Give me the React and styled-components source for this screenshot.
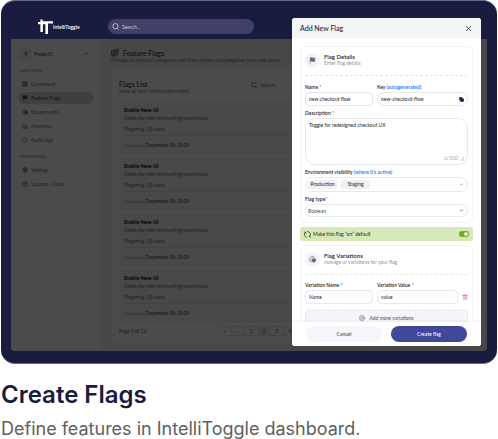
import React from 'react';
import styled, { createGlobalStyle } from 'styled-components';
import {
  LayoutDashboard, Flag, ChartColumn, CircleAlert, Settings, CircleHelp,
  ChevronUp, ChevronDown, X, Trash2, CirclePlus, Copy,
} from 'lucide-react';

const Global = createGlobalStyle`
  *, *::before, *::after { box-sizing: border-box; }
  body { margin: 0; background: #fff; }
  h1, h2, h3, p { margin: 0; }
  button, input, textarea, select { font: inherit; color: inherit; margin: 0; }
  svg { display: block; flex: none; }
`;

const Page = styled.main`
  font-family: Inter, "Liberation Sans", sans-serif;
  color: #1a1c3f;
  padding: 0 1px;
`;

const Device = styled.section`
  position: relative;
  font-family: Lato, "Liberation Sans", sans-serif;
  font-size: 5px;
  line-height: 6px;
  background: #1a1c3f;
  border: 1px solid #686b83;
  border-width: 1px 0;
  border-radius: 14px;
  padding: 0 10px 12px;
`;

const TopBar = styled.header`
  height: 38px;
  padding: 18px 0 0 27px;
  display: flex;
  align-items: flex-start;
  color: #fff;
`;

const Brand = styled.a`
  display: flex;
  width: 70px;
  color: #fff;
  text-decoration: none;
  font-weight: 600;
  span { margin-top: 5px; }
`;

const SearchPill = styled.label`
  display: flex;
  align-items: center;
  gap: 3px;
  width: 146px;
  height: 15px;
  padding: 0 4px;
  border-radius: 8px;
  background: #41406a;
  color: #c9c9d8;
`;

const BareInput = styled.input`
  border: 0;
  padding: 0;
  outline: 0;
  background: transparent;
  flex: 1;
  min-width: 0;
  width: 0;
  height: 10px;
  &::placeholder { color: inherit; opacity: 1; }
`;

const Dashboard = styled.div`
  display: flex;
  border-radius: 0 0 4px 4px;
  background: #474747;
  overflow: hidden;
`;

const Sidebar = styled.nav`
  width: 90px;
  flex: none;
  padding: 7px 7px 0;
  background: #4b4b4b;
`;

const Project = styled.button`
  display: flex;
  align-items: center;
  width: 100%;
  height: 15px;
  padding: 0 4px 0 1px;
  border: 1px solid #484848;
  border-radius: 5px;
  background: transparent;
  color: #171717;
  text-align: left;
  font-weight: 600;
  b { width: 12px; height: 12px; line-height: 12px; text-align: center; background: #474747; border-radius: 3px; }
  span { flex: 1; padding-left: 2px; }
`;

const MenuLabel = styled.h2`
  font-size: 4px;
  line-height: 6px;
  font-weight: 400;
  color: #262626;
  padding-left: 1px;
  margin: ${p => (p.$spaced ? '8px 0 4px' : '7px 0 4px')};
`;

const MenuLink = styled.a`
  display: flex;
  align-items: center;
  gap: 3px;
  height: 12px;
  margin-bottom: 2px;
  padding-left: 4px;
  border-radius: 6px;
  text-decoration: none;
  color: ${p => (p.$active ? '#151515' : '#222')};
  background: ${p => (p.$active ? '#3f3f3f' : 'transparent')};
`;

const Content = styled.div`
  flex: 1;
  min-width: 0;
  padding: 10px 10px 8px;
`;

const TitleRow = styled.div`
  display: flex;
  align-items: center;
  gap: 4px;
  height: 8px;
  color: #111;
`;

const PageTitle = styled.h1`
  font-size: 7px;
  line-height: 8px;
  font-weight: 600;
`;

const Muted = styled.p`
  color: #242424;
  line-height: 7px;
`;

const Panel = styled.section`
  margin-top: 6px;
  padding: 8px 8px 7px;
  border-radius: 5px;
  background: #4b4b4b;
`;

const PanelHead = styled.div`
  display: flex;
  height: 24px;
  > div { width: 128px; padding-top: 2px; }
  h2 { font-size: 7px; line-height: 8px; color: #111; font-weight: 600; }
`;

const PanelSearch = styled.label`
  display: flex;
  align-items: center;
  gap: 3px;
  flex: 1;
  height: 14px;
  padding: 0 3px;
  border: 1px solid #474747;
  border-radius: 4px;
  color: #242424;
`;

const FlagCard = styled.article`
  height: 53px;
  margin-bottom: 3px;
  padding: 4px 5px;
  border-radius: 6px;
  background: #484848;
  color: #1f1f1f;
  h3 { color: #0c0c0c; font-size: 5px; line-height: 8px; font-weight: 800; }
  p { line-height: 8px; }
`;

const Target = styled.p`
  height: 14px;
  padding-top: 3px;
  border-bottom: 1px solid #434343;
`;

const Created = styled.div`
  margin-top: 6px;
  color: #262626;
  font-size: 4px;
  strong { font-size: 5px; color: #161616; font-weight: 600; }
`;

const Pager = styled.div`
  display: flex;
  align-items: center;
  color: #191919;
  height: 10px;
  span { width: 100px; }
`;

const PageButton = styled.button`
  width: 13px;
  height: 10px;
  flex: none;
  padding: 0;
  border: 1px solid #444;
  border-left-width: 0;
  background: ${p => (p.$active ? '#424746' : 'transparent')};
  line-height: 8px;
`;

const Drawer = styled.section`
  position: absolute;
  top: 17px;
  right: 16px;
  bottom: 17px;
  width: 189px;
  display: flex;
  flex-direction: column;
  overflow: hidden;
  border-radius: 3px;
  background: #fff;
  color: #24262b;
`;

const DrawerHead = styled.header`
  display: flex;
  align-items: center;
  justify-content: space-between;
  height: 20px;
  flex: none;
  padding: 0 8px;
  background: #f4f5f7;
  h2 { font-size: 7px; line-height: 8px; font-weight: 500; }
`;

const IconButton = styled.button`
  padding: 0;
  border: 0;
  background: transparent;
  color: ${p => p.$color || '#24262b'};
`;

const DrawerBody = styled.form`
  flex: 1;
  min-height: 0;
  overflow: hidden;
  padding: 8px 8px 0;
`;

const Group = styled.section`
  border: 1px solid #f2f3f5;
  border-radius: 6px;
  padding: 6px 4px 5px;
`;

const GroupHead = styled.div`
  display: flex;
  align-items: center;
  gap: 4px;
  height: 23px;
  padding-bottom: 8px;
  border-bottom: 1px dashed #e6e7e9;
  h3 { font-size: 6px; line-height: 7px; font-weight: 600; }
  p { color: #929398; line-height: 7px; }
`;

const Round = styled.span`
  display: grid;
  place-items: center;
  width: 15px;
  height: 15px;
  border-radius: 50%;
  background: #f2f3f6;
  color: #686a76;
`;

const FieldRow = styled.div`
  display: flex;
  gap: 4px;
  margin-top: ${p => (p.$tight ? '7px' : '8px')};
`;

const Field = styled.div`
  display: flex;
  flex-direction: column;
  gap: 2px;
  flex: ${p => p.$grow || 'none'};
  width: ${p => p.$width || 'auto'};
  margin-top: ${p => p.$top || '0'};
  min-width: 0;
  label, > span { font-weight: 600; line-height: 6px; white-space: nowrap; }
  em { font-style: normal; color: #1677ff; }
  i { font-style: normal; color: #ef4444; }
`;

const Box = styled.div`
  display: flex;
  align-items: center;
  flex: none;
  height: 14px;
  padding: 0 3px;
  border: 1px solid #e8e9ec;
  border-radius: ${p => (p.$round ? '7px' : '4px')};
`;

const ValueRow = styled.div`
  display: flex;
  align-items: center;
  gap: 4px;
`;

const ValueBox = styled(Box)`
  flex: 1;
  min-width: 0;
`;

const AreaBox = styled.div`
  height: 47px;
  display: flex;
  flex-direction: column;
  padding: 3px;
  border: 1px solid #e8e9ec;
  border-radius: 10px;
  textarea { flex: 1; min-height: 0; border: 0; padding: 0; resize: none; outline: 0; background: transparent; overflow: hidden; }
  div { display: flex; justify-content: flex-end; align-items: flex-end; gap: 2px; color: #a4a5b2; }
`;

const ChipSelect = styled.button`
  display: flex;
  align-items: center;
  gap: 4px;
  width: 100%;
  height: 15px;
  padding: 0 3px 0 2px;
  border: 1px solid #e8e9ec;
  border-radius: 8px;
  background: #fff;
  svg { margin-left: auto; color: #777; }
`;

const Chip = styled.span`
  width: 29px;
  height: 9px;
  line-height: 9px;
  text-align: center;
  border-radius: 2px;
  background: #f0f0f0;
`;

const SelectBox = styled.div`
  display: flex;
  align-items: center;
  height: 13px;
  padding: 0 3px 0 2px;
  border: 1px solid #e8e9ec;
  border-radius: 7px;
  color: #4b4d52;
  select { appearance: none; flex: 1; min-width: 0; border: 0; padding: 0; background: transparent; outline: 0; }
`;

const ToggleRow = styled.label`
  display: flex;
  align-items: center;
  gap: 2px;
  height: 14px;
  margin: 4px 0;
  padding: 0 4px;
  border-radius: 3px;
  background: #d7e9b8;
  span { flex: 1; }
`;

const Switch = styled.input`
  appearance: none;
  width: 10px;
  height: 6px;
  border-radius: 3px;
  background: #76aa2d;
  display: flex;
  align-items: center;
  justify-content: flex-end;
  padding: 1px;
  &::before { content: ''; width: 4px; height: 4px; border-radius: 50%; background: #dff0c7; }
  &:not(:checked) { justify-content: flex-start; background: #9a9c97; }
`;

const AddButton = styled.button`
  display: flex;
  align-items: center;
  justify-content: center;
  gap: 4px;
  width: 100%;
  height: 15px;
  margin-top: 6px;
  border: 1px dashed #e1e3e8;
  border-radius: 3px;
  background: #f5f6f9;
  color: #4c4e56;
`;

const DrawerFoot = styled.footer`
  display: flex;
  gap: 9px;
  flex: none;
  height: 24px;
  padding: 4px 14px;
  box-shadow: 0 -1px 3px rgba(0, 0, 0, 0.06);
  background: #fff;
  z-index: 1;
`;

const Action = styled.button`
  flex: 1;
  height: 16px;
  border: 0;
  border-radius: 8px;
  background: ${p => (p.$primary ? '#424899' : '#f5f6fb')};
  color: ${p => (p.$primary ? '#fff' : '#3b3c43')};
`;

const Caption = styled.section`
  padding-top: 16px;
  h2 { font-size: 24px; line-height: 30px; font-weight: 600; }
  p { margin-top: 8px; font-size: 18px; line-height: 22px; color: #606060; }
`;

function Logo() {
  return (
    <svg width="15" height="16" viewBox="0 0 15 16" fill="#fff" aria-hidden="true">
      <path d="M0 3H2.4V.4H4.6V2.2H15V4.6H10V15H7.4V5.2H4.9V13H2.4V5.2H0Z" />
    </svg>
  );
}

function SearchIcon({ size = 7 }) {
  return (
    <svg width={size} height={size} viewBox="0 0 14 14" fill="none" stroke="currentColor" strokeWidth="1.8" aria-hidden="true">
      <circle cx="7" cy="6.5" r="5.3" />
      <path d="M10.6 10.5L13 13" />
    </svg>
  );
}

function FlagsIcon() {
  return (
    <svg width="8" height="8" viewBox="0 0 16 16" fill="none" stroke="currentColor" strokeWidth="1.8" aria-hidden="true">
      <path d="M4 3H1.5V10L3 14H9" />
      <path d="M6 2.5L14.5 1L13 11L6 12Z" />
      <path d="M8 5.5L12 4.5M8 8.5L11 7.5" />
    </svg>
  );
}

function SwapIcon({ size = 6 }) {
  return (
    <svg width={size} height={size} viewBox="0 0 14 14" fill="none" stroke="currentColor" strokeWidth="1.6" aria-hidden="true">
      <path d="M12 5A5.5 5.5 0 1 0 5 12" />
      <path d="M6 6H13V10L10 13L6 10Z" fill="currentColor" />
    </svg>
  );
}

function RefreshIcon() {
  return (
    <svg width="7" height="7" viewBox="0 0 14 14" fill="none" stroke="#284012" strokeWidth="1.5" aria-hidden="true">
      <path d="M5.5 12.8A6 6 0 0 1 3 2.5M0.5 2.2H3.2V5M6 1.2A6 6 0 0 1 11 11.5M13.5 11.8H10.8V9" />
    </svg>
  );
}

const mainMenu = [
  ['Dashboard', <LayoutDashboard size={6} strokeWidth={3} />],
  ['Feature Flags', <Flag size={6} fill="currentColor" />],
  ['Experiments', <SwapIcon />],
  ['Analytics', <ChartColumn size={6} strokeWidth={3} />],
  ['Audit logs', <CircleAlert size={6} />],
];
const preferences = [
  ['Settings', <Settings size={6} strokeWidth={4} />],
  ['Support / Docs', <CircleHelp size={6} strokeWidth={3} />],
];

function Menu({ items }) {
  return items.map(([name, icon]) => (
    <MenuLink href="#" key={name} $active={name === 'Feature Flags'}>{icon}{name}</MenuLink>
  ));
}

export default function App() {
  return (
    <Page>
      <Global />
      <Device>
        <TopBar>
          <Brand href="#"><Logo /><span>IntelliToggle</span></Brand>
          <SearchPill><SearchIcon /><BareInput aria-label="Search" placeholder="Search..." /></SearchPill>
        </TopBar>
        <Dashboard>
          <Sidebar>
            <Project type="button"><b>P</b><span>Project1</span><ChevronUp size={5} strokeWidth={4} /></Project>
            <MenuLabel>MAIN MENU</MenuLabel>
            <Menu items={mainMenu} />
            <MenuLabel $spaced>PREFERENCES</MenuLabel>
            <Menu items={preferences} />
          </Sidebar>
          <Content>
            <TitleRow><FlagsIcon /><PageTitle>Feature Flags</PageTitle></TitleRow>
            <Muted>Manage all product categories and their nested subcategories from one place.</Muted>
            <Panel>
              <PanelHead>
                <div><h2>Flags List</h2><Muted>View all your clients information.</Muted></div>
                <PanelSearch><SearchIcon size={6} /><BareInput aria-label="Search flags" placeholder="Search..." /></PanelSearch>
              </PanelHead>
              {[1, 2, 3, 4].map(id => (
                <FlagCard key={id}>
                  <h3>Enable-New-Ui</h3>
                  <p>Gates the new onboarding experience.</p>
                  <Target>Targeting: All users</Target>
                  <Created>Created at : <strong>December 30, 2025</strong></Created>
                </FlagCard>
              ))}
              <Pager>
                <span>Page 2 of 16</span>
                {['«', '‹', '1', '2', '3', '4'].map(n => (
                  <PageButton type="button" key={n} $active={n === '2'}>{n}</PageButton>
                ))}
              </Pager>
            </Panel>
          </Content>
        </Dashboard>

        <Drawer role="dialog" aria-labelledby="drawer-title">
          <DrawerHead>
            <h2 id="drawer-title">Add New Flag</h2>
            <IconButton type="button" aria-label="Close"><X size={9} strokeWidth={2} /></IconButton>
          </DrawerHead>
          <DrawerBody id="flag-form">
            <Group>
              <GroupHead>
                <Round><Flag size={7} fill="currentColor" /></Round>
                <div><h3>Flag Details</h3><p>Enter flag details</p></div>
              </GroupHead>
              <FieldRow>
                <Field $width="68px">
                  <label htmlFor="name">Name <em>*</em></label>
                  <Box><BareInput id="name" defaultValue="new checkout flow" /></Box>
                </Field>
                <Field $grow="1">
                  <label htmlFor="key">Key <em>(autogenerated)</em></label>
                  <Box $round>
                    <BareInput id="key" defaultValue="new-checkout-flow" />
                    <IconButton type="button" aria-label="Copy key" $color="#1a1c3f"><Copy size={5} strokeWidth={3} fill="currentColor" /></IconButton>
                  </Box>
                </Field>
              </FieldRow>
              <Field $top="4px">
                <label htmlFor="description">Description <i>*</i></label>
                <AreaBox>
                  <textarea id="description" defaultValue="Toggle for redesigned checkout UX" />
                  <div>
                    <span>0/200</span>
                    <svg width="4" height="4" viewBox="0 0 4 4" stroke="currentColor" strokeWidth="0.6"><path d="M0 4L4 0M2 4L4 2" /></svg>
                  </div>
                </AreaBox>
              </Field>
              <Field $top="4px">
                <span id="env-label">Environment visibility <em>(where it’s active)</em></span>
                <ChipSelect type="button" aria-haspopup="listbox" aria-labelledby="env-label">
                  <Chip>Production</Chip><Chip>Staging</Chip><ChevronDown size={5} strokeWidth={3} />
                </ChipSelect>
              </Field>
              <Field $top="4px">
                <label htmlFor="type">Flag type<em>*</em></label>
                <SelectBox>
                  <select id="type" defaultValue="Boolean"><option>Boolean</option></select>
                  <ChevronDown size={5} strokeWidth={3} />
                </SelectBox>
              </Field>
            </Group>
            <ToggleRow>
              <RefreshIcon /><span>Make this flag “on” default</span>
              <Switch type="checkbox" role="switch" defaultChecked />
            </ToggleRow>
            <Group>
              <GroupHead>
                <Round><SwapIcon size={7} /></Round>
                <div><h3>Flag Variations</h3><p>manage ur variations for your flag</p></div>
              </GroupHead>
              <FieldRow $tight>
                <Field $width="68px">
                  <label htmlFor="var-name">Variation Name <em>*</em></label>
                  <Box><BareInput id="var-name" defaultValue="Name" /></Box>
                </Field>
                <Field $grow="1">
                  <label htmlFor="var-value">Variation Value <em>*</em></label>
                  <ValueRow>
                    <ValueBox><BareInput id="var-value" defaultValue="value" /></ValueBox>
                    <IconButton type="button" aria-label="Delete variation" $color="#f0524f"><Trash2 size={6} strokeWidth={2} /></IconButton>
                  </ValueRow>
                </Field>
              </FieldRow>
              <AddButton type="button"><CirclePlus size={6} />Add more variations</AddButton>
            </Group>
          </DrawerBody>
          <DrawerFoot>
            <Action type="button">Cancel</Action>
            <Action type="submit" form="flag-form" $primary>Create flag</Action>
          </DrawerFoot>
        </Drawer>
      </Device>
      <Caption>
        <h2>Create Flags</h2>
        <p>Define features in IntelliToggle dashboard.</p>
      </Caption>
    </Page>
  );
}
